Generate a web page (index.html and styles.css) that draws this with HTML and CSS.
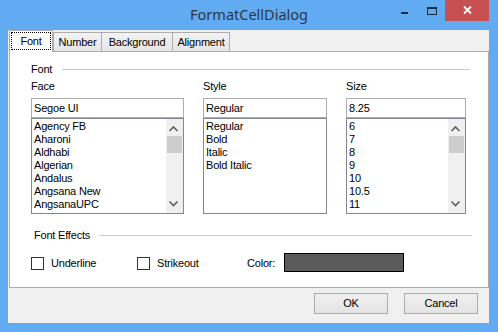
FILE: index.html
```html
<!DOCTYPE html>
<html>
<head>
<meta charset="utf-8">
<link rel="stylesheet" href="styles.css">
</head>
<body>
<div class="window">
  <div class="titlebar">
    <div class="spacer"></div>
    <div class="title">FormatCellDialog</div>
    <div class="controls">
      <div class="btn-min"><span class="dash"></span></div>
      <div class="btn-max"><span class="box"></span></div>
      <div class="btn-close">
        <svg width="9" height="8" viewBox="0 0 9 8"><path d="M1 0.5 L8 7.5 M8 0.5 L1 7.5" stroke="#fff" stroke-width="1.8" fill="none"/></svg>
      </div>
    </div>
  </div>
  <div class="client">
    <div class="tabs">
      <div class="tab selected t-font"><span class="focus">Font</span></div>
      <div class="tab t-number">Number</div>
      <div class="tab t-bg">Background</div>
      <div class="tab t-align">Alignment</div>
    </div>
    <div class="page">
      <div class="group-head font-head"><span class="legend">Font</span><span class="rule"></span></div>
      <div class="cols">
        <div class="lbl">Face</div>
        <div class="lbl">Style</div>
        <div class="lbl">Size</div>
        <div class="textbox">Segoe UI</div>
        <div class="textbox">Regular</div>
        <div class="textbox">8.25</div>
        <div class="list">
          <div class="items">
            <div>Agency FB</div><div>Aharoni</div><div>Aldhabi</div><div>Algerian</div><div>Andalus</div><div>Angsana New</div><div>AngsanaUPC</div>
          </div>
          <div class="scroll">
            <div class="arrow up"><svg width="17" height="17" viewBox="0 0 17 17"><path d="M3.5 12 L7.5 8 L11.5 12" stroke="#606060" stroke-width="1.6" fill="none"/></svg></div>
            <div class="thumb"></div>
            <div class="track"></div>
            <div class="arrow down"><svg width="17" height="17" viewBox="0 0 17 17"><path d="M3.5 5.5 L7.5 9.5 L11.5 5.5" stroke="#606060" stroke-width="1.6" fill="none"/></svg></div>
          </div>
        </div>
        <div class="list">
          <div class="items">
            <div>Regular</div><div>Bold</div><div>Italic</div><div>Bold Italic</div>
          </div>
        </div>
        <div class="list">
          <div class="items">
            <div>6</div><div>7</div><div>8</div><div>9</div><div>10</div><div>10.5</div><div>11</div>
          </div>
          <div class="scroll">
            <div class="arrow up"><svg width="17" height="17" viewBox="0 0 17 17"><path d="M3.5 12 L7.5 8 L11.5 12" stroke="#606060" stroke-width="1.6" fill="none"/></svg></div>
            <div class="thumb"></div>
            <div class="track"></div>
            <div class="arrow down"><svg width="17" height="17" viewBox="0 0 17 17"><path d="M3.5 5.5 L7.5 9.5 L11.5 5.5" stroke="#606060" stroke-width="1.6" fill="none"/></svg></div>
          </div>
        </div>
      </div>
      <div class="group-head effects-head"><span class="legend">Font Effects</span><span class="rule"></span></div>
      <div class="effects">
        <div class="check c-under"><span class="cbox"></span><span>Underline</span></div>
        <div class="check c-strike"><span class="cbox"></span><span>Strikeout</span></div>
        <div class="color-lbl">Color:</div>
        <div class="swatch"></div>
      </div>
    </div>
    <div class="footer">
      <div class="button">OK</div>
      <div class="button">Cancel</div>
    </div>
  </div>
</div>
</body>
</html>
```
FILE: styles.css
```css
html, body {
  margin: 0;
  padding: 0;
}
body {
  width: 498px;
  height: 332px;
  overflow: hidden;
  font-family: "Liberation Sans", Arial, sans-serif;
  font-size: 11px;
  letter-spacing: -0.2px;
  color: #000;
}
.window {
  width: 498px;
  height: 332px;
  background: #60abf2;
  display: flex;
  flex-direction: column;
}
.titlebar {
  height: 30px;
  display: grid;
  grid-template-columns: 1fr auto 1fr;
  align-items: start;
}
.title {
  font-family: "Noto Sans", "Open Sans", sans-serif;
  font-size: 14.5px;
  letter-spacing: 0;
  color: #2d3844;
  line-height: 30px;
  margin-top: -1px;
}
.controls {
  justify-self: end;
  display: flex;
  margin-right: 9px;
  height: 21px;
}
.btn-min {
  width: 26px;
  height: 21px;
}
.btn-min .dash {
  display: block;
  width: 7px;
  height: 2px;
  background: #1b2a3a;
  margin: 12px 0 0 9px;
}
.btn-max {
  width: 27px;
  height: 21px;
}
.btn-max .box {
  display: block;
  width: 8px;
  height: 5px;
  border: 1px solid #1b2a3a;
  border-top-width: 2px;
  margin: 7px 0 0 9px;
}
.btn-close {
  width: 44px;
  height: 21px;
  background: #c75050;
  display: flex;
  align-items: center;
  justify-content: center;
}
.btn-close svg {
  display: block;
  margin-top: -1px;
}
.client {
  margin: 0 9px 9px 8px;
  height: 293px;
  background: #f0f0f0;
  display: flex;
  flex-direction: column;
}
.tabs {
  height: 21px;
  display: flex;
  align-items: flex-end;
  padding-left: 1px;
}
.tab {
  height: 18px;
  line-height: 18px;
  border: 1px solid #acacac;
  border-bottom: none;
  background: linear-gradient(#f3f3f3, #e6e6e6);
  text-align: center;
  margin-left: -1px;
}
.tab:first-child {
  margin-left: 0;
}
.tab.selected {
  height: 21px;
  line-height: 19px;
  background: #fff;
  margin-bottom: -1px;
  position: relative;
  z-index: 1;
  padding: 0 1px;
}
.tab .focus {
  display: block;
  margin: 1px 0 0 0;
  height: 16px;
  line-height: 16px;
  border: 1px dotted #000;
}
.t-font { width: 40px; }
.t-number { width: 47px; margin-left: 0; }
.t-bg { width: 70px; }
.t-align { width: 56px; }
.page {
  margin-left: 1px;
  height: 235px;
  border: 1px solid #acacac;
  background: #fff;
  display: flex;
  flex-direction: column;
}
.group-head {
  display: flex;
  align-items: center;
  height: 14px;
  line-height: 14px;
}
.group-head .rule {
  flex: 1;
  height: 1px;
  background: #c9c9c9;
  margin-left: 10px;
}
.font-head {
  margin: 10px 18px 0 21px;
}
.effects-head {
  margin: 14px 16px 0 24px;
}
.cols {
  margin: 3px 0 0 21px;
  display: grid;
  grid-template-columns: 153px 124px 120px;
  grid-template-rows: 14px 25px 96px;
  column-gap: 19px;
}
.lbl {
  line-height: 14px;
}
.textbox {
  margin-top: 5px;
  height: 18px;
  line-height: 18px;
  border: 1px solid #abadb3;
  padding-left: 2px;
}
.list {
  height: 94px;
  border: 1px solid #828790;
  display: flex;
  overflow: hidden;
}
.items {
  flex: 1;
  padding: 1px 0 0 2px;
  line-height: 13px;
}
.scroll {
  width: 17px;
  background: #f0f0f0;
  display: flex;
  flex-direction: column;
}
.arrow {
  height: 17px;
}
.arrow svg {
  display: block;
}
.thumb {
  height: 17px;
  margin: 0 1px;
  background: #cdcdcd;
}
.track {
  flex: 1;
}
.effects {
  margin: 11px 0 0 21px;
  height: 19px;
  display: flex;
  align-items: center;
}
.check {
  display: flex;
  align-items: center;
}
.cbox {
  width: 11px;
  height: 11px;
  border: 1px solid #333;
  background: #fff;
  margin-right: 7px;
  margin-top: 1px;
}
.c-under { width: 106px; }
.c-strike { width: 110px; }
.color-lbl {
  width: 37px;
}
.swatch {
  width: 118px;
  height: 17px;
  border: 1px solid #000;
  background: #5a5a5a;
}
.footer {
  flex: 1;
  display: flex;
  justify-content: flex-end;
  align-items: flex-start;
  padding: 5px 11px 0 0;
  gap: 16px;
}
.button {
  width: 72px;
  height: 19px;
  line-height: 19px;
  border: 1px solid #acacac;
  background: linear-gradient(#f0f0f0, #e5e5e5);
  text-align: center;
}
```
